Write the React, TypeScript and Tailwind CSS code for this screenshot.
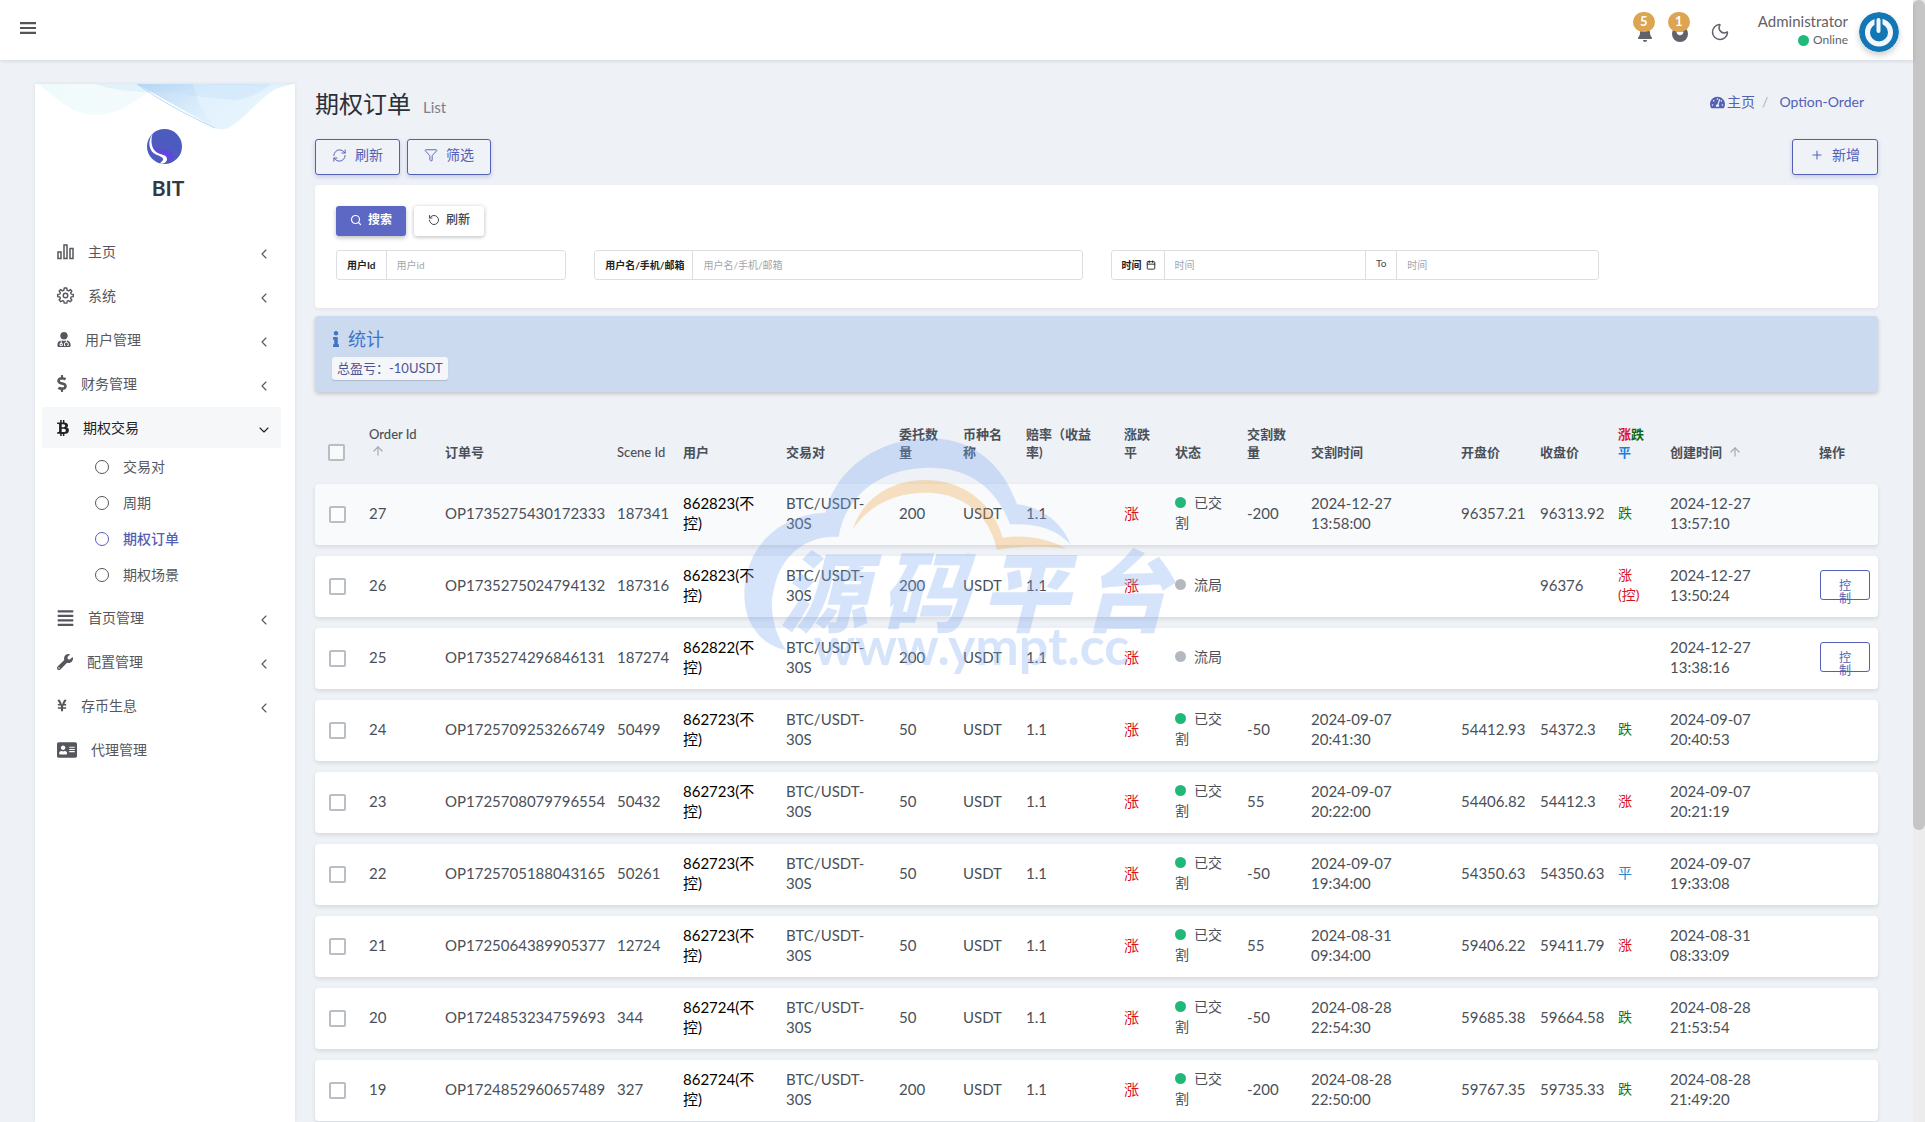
import React from 'react';
import {
  FaAddressCard,
  FaAlignJustify,
  FaBell,
  FaBtc,
  FaDollarSign,
  FaInfo,
  FaTachometerAlt,
  FaUserMd,
  FaWrench,
  FaYenSign,
} from 'react-icons/fa';
import {
  ArrowUp,
  Calendar,
  ChevronDown,
  ChevronLeft,
  Filter,
  Moon,
  Plus,
  RefreshCw,
  RotateCcw,
  Search,
} from 'lucide-react';

type Child = { label: string; active?: boolean };
type Item = {
  label: string;
  icon: React.ReactNode;
  open?: boolean;
  leaf?: boolean;
  children?: Child[];
};

function BarsOutline() {
  return (
    <svg width="17" height="16" viewBox="0 0 17 16" fill="none" stroke="currentColor" strokeWidth="1.5">
      <rect x="1" y="8" width="3" height="6.5" />
      <rect x="7" y="1" width="3" height="13.5" />
      <rect x="13" y="4.5" width="3" height="10" />
    </svg>
  );
}

function GearOutline() {
  return (
    <svg width="17" height="17" viewBox="0 0 24 24" fill="none" stroke="currentColor" strokeWidth="2" strokeLinejoin="round">
      <circle cx="12" cy="12" r="3.2" />
      <path d="M10.2 1.5H13.8L14.4 4.6L16.4 5.4L19 3.6L21 5.8L19.2 8.2L20 10L23 10.4V13.6L20 14.1L19.2 16L21 18.4L18.6 20.8L16.2 19.2L14.4 20L13.8 22.8H10.2L9.6 20L7.8 19.2L5.4 20.8L3 18.4L4.8 16L4 14.1L1 13.6V10.4L4 10L4.8 8.2L3 5.8L5.2 3.6L7.8 5.4L9.6 4.6Z" />
    </svg>
  );
}

const menu: Item[] = [
  { label: '主页', icon: <BarsOutline /> },
  { label: '系统', icon: <GearOutline /> },
  { label: '用户管理', icon: <FaUserMd size={15} className="w-[14px]" /> },
  { label: '财务管理', icon: <FaDollarSign size={17} className="w-[10px]" /> },
  {
    label: '期权交易',
    icon: <FaBtc size={16} className="w-[12px]" />,
    open: true,
    children: [
      { label: '交易对' },
      { label: '周期' },
      { label: '期权订单', active: true },
      { label: '期权场景' },
    ],
  },
  { label: '首页管理', icon: <FaAlignJustify size={18} className="w-[17px]" /> },
  { label: '配置管理', icon: <FaWrench size={16} /> },
  { label: '存币生息', icon: <FaYenSign size={17} className="w-[10px]" /> },
  { label: '代理管理', icon: <FaAddressCard size={20} />, leaf: true },
];

function Sidebar() {
  return (
    <nav className="mt-6 w-[260px] shrink-0 bg-white shadow-[0_0_4px_rgba(0,0,0,0.08)]">
      <div className="relative h-[136px]">
        <svg className="absolute inset-x-0 top-0 w-full" viewBox="0 0 260 46" fill="none">
          <defs>
            <linearGradient id="wave" x1="0" y1="0" x2="1" y2="0.4">
              <stop offset="0" stopColor="#a9cff2" />
              <stop offset="0.5" stopColor="#cfe7fa" />
              <stop offset="1" stopColor="#e9f7fd" />
            </linearGradient>
            <linearGradient id="mint" x1="0" y1="0" x2="1" y2="0">
              <stop offset="0" stopColor="#eefafb" />
              <stop offset="1" stopColor="#f6fdfd" />
            </linearGradient>
          </defs>
          <path d="M2 0C22 12 34 31 62 31C88 30 96 16 120 6L128 0Z" fill="url(#mint)" />
          <path d="M30 0C48 8 58 24 80 28C96 22 104 10 128 4L140 0Z" fill="#f3fafc" />
          <path d="M60 0C90 10 130 10 160 4C200 14 230 8 258 0Z" fill="#e2f2fa" />
          <path d="M102 0L180 44C186 47 194 45 200 40C218 26 232 6 252 0Z" fill="url(#wave)" opacity="0.8" />
          <path d="M158 0C164 20 170 38 186 45C206 42 216 18 240 2Z" fill="#e4f3fd" opacity="0.75" />
          <path d="M102 0C124 16 150 30 180 44" stroke="#9fc8ee" strokeWidth="1" opacity="0.7" />
          <path d="M120 0C140 12 160 12 200 16C216 14 226 8 236 0Z" fill="#bfdcf5" opacity="0.35" />
        </svg>
        <a href="#home" className="relative flex flex-col items-center pt-[45px] text-[#2f3a48]">
          <svg className="mr-0.5" width="35" height="35" viewBox="0 0 35 35">
            <circle cx="17.5" cy="17.5" r="17.5" fill="#4c5bbd" />
            <path d="M7 17C11 23 22 18 26 24C28 28 25 31 21 33L18 29C17 25 9 26 5 19Z" fill="#6047dc" />
            <path d="M5.500 5C1 11 1 21 8 25C12 27 17 28 16 31C15.500 32 14 33 13 34.500C17 35.500 20 33 20 30C20 26 15 26 11 24C5 21 3 13 5.500 5Z" fill="#fff" />
          </svg>
          <span className="mt-2 ml-1.5 text-[21px] leading-8 font-bold">BIT</span>
        </a>
      </div>
      <ul className="pt-[11px]">
        {menu.map((item) => (
          <li key={item.label}>
            <a
              href={'#' + item.label}
              className={
                'mr-3.5 ml-[7px] flex h-[41px] items-center pr-[9px] pl-[15px] ' +
                (item.open ? 'bg-[#f6f7f9] text-[#222]' : 'mb-[3px] text-[#55575c]')
              }
            >
              {item.icon}
              <span className="ml-3.5 text-sm">{item.label}</span>
              {!item.leaf && (
                <span className="mt-1 ml-auto">
                  {item.open ? <ChevronDown size={16} strokeWidth={1.7} /> : <ChevronLeft size={16} strokeWidth={1.7} />}
                </span>
              )}
            </a>
            {item.children && (
              <ul className="mb-1 pt-px">
                {item.children.map((c) => (
                  <li key={c.label}>
                    <a
                      href={'#' + c.label}
                      className={
                        'flex h-9 items-center gap-3.5 pl-[60px] text-sm ' +
                        (c.active ? 'font-medium text-[#5360b5]' : 'text-[#55575c]')
                      }
                    >
                      <span className="size-3.5 rounded-full border-[1.5px] border-current" />
                      {c.label}
                    </a>
                  </li>
                ))}
              </ul>
            )}
          </li>
        ))}
      </ul>
    </nav>
  );
}

const badge =
  'absolute -top-3.5 -left-1 flex h-5 w-[22px] items-center justify-center rounded-full bg-[#dda451] text-[13px] font-bold text-white';

function TopBar() {
  return (
    <header className="relative z-10 flex h-15 items-center bg-white pr-3.5 pl-5 text-[#5f6268] shadow-[0_1px_4px_rgba(0,0,0,0.12)]">
      <button aria-label="菜单" className="mb-1 text-[#555]">
        <svg width="16" height="14" viewBox="0 0 16 14" fill="currentColor">
          <path d="M0 1H16V3.200H0ZM0 5.900H16V8.100H0ZM0 10.800H16V13H0Z" />
        </svg>
      </button>
      <div className="ml-auto flex items-center">
        <button aria-label="通知" className="relative mt-2 mr-[19px]">
          <FaBell size={16} />
          <span className={badge}>5</span>
        </button>
        <button aria-label="消息" className="relative mt-2 mr-[22px]">
          <svg width="16" height="16" viewBox="0 0 16 16">
            <circle cx="8" cy="8" r="8" fill="#5f6268" />
            <path d="M4.500 5.500H11.500C11.500 10.500 4.500 10.500 4.500 5.500Z" fill="#fff" />
          </svg>
          <span className={badge}>1</span>
        </button>
        <button aria-label="夜间模式" className="mt-1 mr-7">
          <Moon size={20} strokeWidth={1.8} />
        </button>
        <a href="#profile" className="flex items-center">
          <span className="flex flex-col items-end">
            <span className="text-[15px] leading-5">Administrator</span>
            <span className="flex items-center gap-1 text-xs leading-[18px]">
              <i className="size-[11px] rounded-full bg-[#21b978]" />
              Online
            </span>
          </span>
          <svg className="mt-1 ml-[11px] rounded-full shadow-[0_3px_6px_rgba(0,0,0,0.2)]" width="40" height="40" viewBox="0 0 40 40">
            <circle cx="20" cy="20" r="20" fill="#1377b5" />
            <circle cx="20" cy="20.500" r="11.500" fill="none" stroke="#f4f7f9" strokeWidth="5" />
            <path d="M16 5H20V14H16Z" fill="#1377b5" />
            <path d="M19.500 8V20" stroke="#1377b5" strokeWidth="8" strokeLinecap="round" />
            <path d="M19.500 8V19" stroke="#f4f7f9" strokeWidth="4" strokeLinecap="round" />
          </svg>
        </a>
      </div>
    </header>
  );
}

const label = 'flex shrink-0 items-center gap-1 border-r border-[#dbdfe3] text-[10px] font-bold text-[#222]';
const field = 'w-0 min-w-0 flex-1 bg-transparent px-2.5 text-[10px] text-[#444] outline-none placeholder:text-[#a3a6ab]';
const group = 'flex h-[30px] rounded-[3px] border border-[#dbdfe3] bg-white';

function FilterPanel() {
  return (
    <form className="mt-2.5 rounded bg-white px-[21px] pt-[21px] pb-7 shadow-[0_2px_4px_rgba(0,0,0,0.05)]">
      <div className="flex gap-2">
        <button type="button" className="flex h-[30px] items-center gap-1.5 rounded-[3px] bg-[#5c68c3] px-3.5 pb-0.5 text-xs font-bold text-white shadow-[0_2px_4px_rgba(0,0,0,0.25)]">
          <Search size={12} strokeWidth={2.4} />
          搜索
        </button>
        <button type="button" className="flex h-[30px] items-center gap-1.5 rounded-[3px] bg-white px-3.5 pb-0.5 text-xs font-medium text-[#414750] shadow-[0_1px_4px_rgba(0,0,0,0.28)]">
          <RotateCcw size={12} strokeWidth={2} />
          刷新
        </button>
      </div>
      <div className="mt-3.5 grid grid-cols-12 gap-7">
        <div className={group + ' col-span-2'}>
          <label htmlFor="uid" className={label + ' px-2.5'}>用户Id</label>
          <input id="uid" placeholder="用户id" className={field} />
        </div>
        <div className={group + ' col-span-4'}>
          <label htmlFor="uname" className={label + ' pr-2 pl-2.5'}>用户名/手机/邮箱</label>
          <input id="uname" placeholder="用户名/手机/邮箱" className={field} />
        </div>
        <div className={group + ' col-span-4'}>
          <label htmlFor="from" className={label + ' pr-2 pl-2.5'}>
            时间
            <Calendar size={10} strokeWidth={2.2} />
          </label>
          <input id="from" placeholder="时间" className={field} />
          <label htmlFor="to" className="border-x border-[#dbdfe3] px-2.5 pt-0.5 text-[10px] leading-5 text-[#414750]">To</label>
          <input id="to" placeholder="时间" className={field} />
        </div>
      </div>
    </form>
  );
}

type Row = {
  id: string;
  no: string;
  scene: string;
  user: string;
  amount: string;
  done: boolean;
  qty?: string;
  settle?: string;
  open?: string;
  close?: string;
  result?: string;
  created: string;
  action?: boolean;
};

const rows: Row[] = [
  { id: '27', no: 'OP1735275430172333', scene: '187341', user: '862823', amount: '200', done: true, qty: '-200', settle: '2024-12-27 13:58:00', open: '96357.21', close: '96313.92', result: '跌', created: '2024-12-27 13:57:10' },
  { id: '26', no: 'OP1735275024794132', scene: '187316', user: '862823', amount: '200', done: false, close: '96376', result: '涨(控)', created: '2024-12-27 13:50:24', action: true },
  { id: '25', no: 'OP1735274296846131', scene: '187274', user: '862822', amount: '200', done: false, created: '2024-12-27 13:38:16', action: true },
  { id: '24', no: 'OP1725709253266749', scene: '50499', user: '862723', amount: '50', done: true, qty: '-50', settle: '2024-09-07 20:41:30', open: '54412.93', close: '54372.3', result: '跌', created: '2024-09-07 20:40:53' },
  { id: '23', no: 'OP1725708079796554', scene: '50432', user: '862723', amount: '50', done: true, qty: '55', settle: '2024-09-07 20:22:00', open: '54406.82', close: '54412.3', result: '涨', created: '2024-09-07 20:21:19' },
  { id: '22', no: 'OP1725705188043165', scene: '50261', user: '862723', amount: '50', done: true, qty: '-50', settle: '2024-09-07 19:34:00', open: '54350.63', close: '54350.63', result: '平', created: '2024-09-07 19:33:08' },
  { id: '21', no: 'OP1725064389905377', scene: '12724', user: '862723', amount: '50', done: true, qty: '55', settle: '2024-08-31 09:34:00', open: '59406.22', close: '59411.79', result: '涨', created: '2024-08-31 08:33:09' },
  { id: '20', no: 'OP1724853234759693', scene: '344', user: '862724', amount: '50', done: true, qty: '-50', settle: '2024-08-28 22:54:30', open: '59685.38', close: '59664.58', result: '跌', created: '2024-08-28 21:53:54' },
  { id: '19', no: 'OP1724852960657489', scene: '327', user: '862724', amount: '200', done: true, qty: '-200', settle: '2024-08-28 22:50:00', open: '59767.35', close: '59735.33', result: '跌', created: '2024-08-28 21:49:20' },
];

function resultColor(result?: string) {
  if (result === '跌') return 'text-[#0a7a1c]';
  if (result === '平') return 'text-[#2b86d0]';
  return 'text-[#d8131b]';
}

const th = 'px-2 pb-3 text-left align-bottom font-bold';
const box = 'block size-[17px] appearance-none rounded-[2px] border-2 border-[#b9bec5] bg-white/60 checked:bg-[#5c68c3]';

function OrderTable() {
  return (
    <table className="mt-[22px] w-full table-fixed border-separate border-spacing-x-0 border-spacing-y-[11px] text-[#4a5058]">
      <colgroup>
        <col className="w-[46px]" />
        <col className="w-[76px]" />
        <col className="w-[172px]" />
        <col className="w-[66px]" />
        <col className="w-[103px]" />
        <col className="w-[113px]" />
        <col className="w-[64px]" />
        <col className="w-[63px]" />
        <col className="w-[98px]" />
        <col className="w-[51px]" />
        <col className="w-[72px]" />
        <col className="w-[64px]" />
        <col className="w-[150px]" />
        <col className="w-[79px]" />
        <col className="w-[78px]" />
        <col className="w-[52px]" />
        <col className="w-[149px]" />
        <col className="w-[67px]" />
      </colgroup>
      <thead className="text-[13px] leading-[18px]">
        <tr>
          <th className={th + ' pl-[13px]'}>
            <input type="checkbox" aria-label="全选" className={box} />
          </th>
          <th className={th + ' whitespace-nowrap font-medium'}>
            Order Id
            <ArrowUp size={14} className="mt-px mb-[3px] ml-0.5 block text-[#a3a8b0]" />
          </th>
          <th className={th}>订单号</th>
          <th className={th + ' whitespace-nowrap font-medium'}>Scene Id</th>
          <th className={th}>用户</th>
          <th className={th}>交易对</th>
          <th className={th}>委托数量</th>
          <th className={th}>币种名称</th>
          <th className={th}>赔率（收益<br />率)</th>
          <th className={th}>涨跌平</th>
          <th className={th}>状态</th>
          <th className={th}>交割数量</th>
          <th className={th}>交割时间</th>
          <th className={th}>开盘价</th>
          <th className={th}>收盘价</th>
          <th className={th}>
            <span className="text-[#e0101a]">涨</span>
            <span className="text-[#0a6a1c]">跌</span>
            <span className="text-[#1e7ee0]">平</span>
          </th>
          <th className={th}>
            <span className="flex items-center gap-1.5">
              创建时间
              <ArrowUp size={14} className="text-[#a3a8b0]" />
            </span>
          </th>
          <th className={th}>操作</th>
        </tr>
      </thead>
      <tbody className="text-[15px] leading-5">
        {rows.map((r, i) => (
          <tr
            key={r.id}
            className={
              'rounded shadow-[0_2px_4px_rgba(0,0,0,0.1)] [&>td]:h-[61px] [&>td]:px-2 [&>td:first-child]:rounded-l [&>td:last-child]:rounded-r ' +
              '[&>td:not(:first-child)]:pb-[3px] ' +
              (i === 0 ? '[&>td]:bg-[#f9fafc]' : '[&>td]:bg-white')
            }
          >
            <td>
              <input type="checkbox" aria-label={'选择 ' + r.id} className={box + ' ml-1.5'} />
            </td>
            <td>{r.id}</td>
            <td>{r.no}</td>
            <td>{r.scene}</td>
            <td className="text-black">{r.user}(不控)</td>
            <td>BTC/USDT-30S</td>
            <td>{r.amount}</td>
            <td>USDT</td>
            <td>1.1</td>
            <td className="text-[#d8131b]">涨</td>
            <td className="text-sm leading-5">
              <i className={'mr-2 inline-block size-[11px] rounded-full ' + (r.done ? 'bg-[#21b978]' : 'bg-[#b3b9bf]')} />
              {r.done ? '已交割' : '流局'}
            </td>
            <td>{r.qty}</td>
            <td>{r.settle}</td>
            <td>{r.open}</td>
            <td>{r.close}</td>
            <td className={'text-sm leading-5 ' + resultColor(r.result)}>
              <span className="block w-7">{r.result}</span>
            </td>
            <td>{r.created}</td>
            <td>
              {r.action && (
                <button className="ml-px block h-[30px] w-[50px] rounded-[3px] border border-[#5360b5] px-3.5 pt-2 text-xs leading-[13px] text-[#5360b5]">
                  控制
                </button>
              )}
            </td>
          </tr>
        ))}
      </tbody>
    </table>
  );
}

function Watermark() {
  return (
    <div className="pointer-events-none absolute inset-y-0 right-1 left-0 z-20 flex items-center justify-center opacity-30" aria-hidden="true">
      <div className="relative h-[260px] w-[450px] text-[#7aa8f2]">
        <svg className="absolute inset-0" width="450" height="260" viewBox="0 0 1350 780">
          <path
            d="M1003 340C980 275 915 227 843 220C800 100 710 22 582 22C430 22 300 110 268 245C130 250 25 350 25 490C25 575 70 640 150 657C110 600 98 520 115 470C135 375 210 312 308 318C325 200 430 110 580 110C700 110 780 170 822 280C890 277 960 290 1003 340Z"
            fill="currentColor"
          />
          <path
            d="M350 295C380 205 460 147 570 147C680 147 770 215 800 320C860 310 935 320 990 353C920 343 850 345 783 357C760 250 680 185 570 185C470 185 400 225 350 295Z"
            fill="#f2a438"
          />
        </svg>
        <div className="absolute inset-x-0 top-[104px] flex justify-between pr-4 pl-11 font-['Noto_Sans_CJK_SC',sans-serif] text-[88px] leading-[104px] font-black italic">
          <span>源</span>
          <span>码</span>
          <span>平</span>
          <span>台</span>
        </div>
        <div className="absolute top-[182px] left-[78px] text-[52px] leading-[64px] font-bold">www.ympt.cc</div>
      </div>
    </div>
  );
}

const outline =
  'flex h-9 items-center gap-2 rounded-[3px] border border-[#5360b5] bg-[#eff3f8] pb-1 text-sm text-[#5360b5] shadow-[0_2px_4px_rgba(83,96,181,0.25)]';

export default function App() {
  return (
    <div className="relative flex h-screen overflow-hidden bg-[#eef1f6] font-[Lato,'Noto_Sans_CJK_SC',sans-serif]">
      <div className="flex min-w-0 flex-1 flex-col">
        <TopBar />
        <div className="flex min-h-0 flex-1 gap-5 px-[35px]">
          <Sidebar />
          <main className="min-w-0 flex-1 pt-6">
            <div className="flex h-[42px] items-center pb-0.5">
              <h1 className="flex items-baseline gap-3 text-2xl text-[#2c2f36]">
                期权订单
                <small className="text-[15px] text-[#7c8088]">List</small>
              </h1>
              <nav className="mr-3.5 mb-1 ml-auto flex items-center text-sm text-[#5360b5]">
                <a href="#home" className="flex items-center gap-0.5">
                  <FaTachometerAlt size={15} />
                  主页
                </a>
                <span className="mr-[11px] ml-[7px] text-[#b0b4bb]">/</span>
                <a href="#option-order">Option-Order</a>
              </nav>
            </div>
            <div className="mt-[13px] flex gap-[7px]">
              <button className={outline + ' px-4'}>
                <RefreshCw size={15} strokeWidth={1.6} />
                刷新
              </button>
              <button className={outline + ' px-4'}>
                <Filter size={14} strokeWidth={1.6} />
                筛选
              </button>
              <button className={outline + ' ml-auto px-[17px]'}>
                <Plus size={14} strokeWidth={1.8} />
                新增
              </button>
            </div>
            <FilterPanel />
            <section className="mt-2 rounded bg-[#cbdaef] px-[17px] pt-[9px] pb-3 shadow-[0_2px_4px_rgba(0,0,0,0.18)]">
              <h2 className="flex items-center gap-2 text-lg leading-7 text-[#3f74c8]">
                <FaInfo size={16} className="w-2" />
                统计
              </h2>
              <span className="mt-1 flex h-[23px] w-fit items-center rounded-[3px] bg-[#f5f6fa] px-[5px] text-[13px] text-[#4c5593] shadow-[0_1px_1px_rgba(0,0,0,0.15)]">
                总盈亏：-10USDT
              </span>
            </section>
            <OrderTable />
          </main>
        </div>
      </div>
      <div className="w-3 shrink-0 bg-[#ececec]">
        <div className="h-[74%] rounded-full bg-[#c5c5c5]" />
      </div>
      <Watermark />
    </div>
  );
}
